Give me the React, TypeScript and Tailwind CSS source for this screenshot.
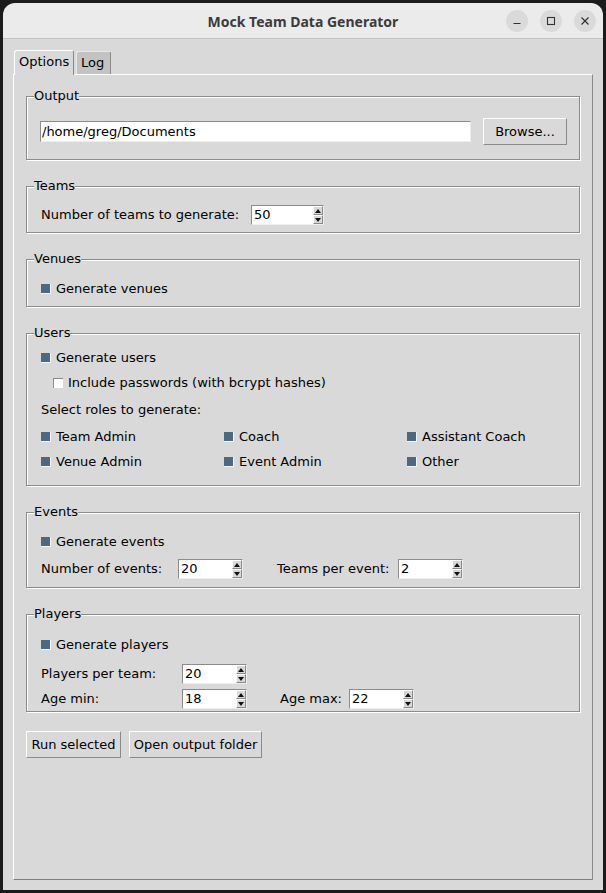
import React from "react";

// shared bits
const sunken = "border-t border-l border-t-[#8c8c8c] border-l-[#8c8c8c] border-b border-r border-b-[#eeeeee] border-r-[#eeeeee]";
const raised = "border-t border-l border-t-white border-l-white border-b border-r border-b-[#8a8a8a] border-r-[#8a8a8a]";

function Check({ label, checked = true, className = "" }: { label: string; checked?: boolean; className?: string }) {
  return (
    <div className={`flex items-center h-[20px] ${className}`}>
      <span
        className={`w-[10px] h-[10px] shrink-0 ${
          checked
            ? "bg-[#4a6984] border-r border-b border-r-[#f4f4f4] border-b-[#f4f4f4]"
            : "bg-white border-t border-l border-t-[#8c8c8c] border-l-[#8c8c8c]"
        }`}
      />
      <span className="ml-[5px]">{label}</span>
    </div>
  );
}

function ArrowBtn({ up }: { up?: boolean }) {
  return (
    <div className={`flex-1 flex items-center justify-center bg-[#d9d9d9] ${raised}`}>
      <svg width="6" height="4" viewBox="0 0 6 4">
        {up ? <path d="M3 0 L6 4 L0 4 Z" fill="#111" /> : <path d="M0 0 L6 0 L3 4 Z" fill="#111" />}
      </svg>
    </div>
  );
}

function Spin({ value, w }: { value: string; w: string }) {
  return (
    <div className={`flex h-[20px] bg-white ${sunken} ${w}`}>
      <div className="flex-1 pl-[2px] leading-[18px]">{value}</div>
      <div className="w-[10px] flex flex-col">
        <ArrowBtn up />
        <ArrowBtn />
      </div>
    </div>
  );
}

function Group({ title, className = "", children }: { title: string; className?: string; children: React.ReactNode }) {
  return (
    <fieldset
      className={`border border-[#8c8c8c] shadow-[inset_1px_1px_0_#ffffff,1px_1px_0_#ffffff] pl-[14px] ${className}`}
    >
      <legend className="-ml-[7px] px-0 leading-[16px] bg-[#d9d9d9]">{title}</legend>
      {children}
    </fieldset>
  );
}

function Button({ label, w }: { label: string; w: string }) {
  return (
    <button className={`h-[27px] bg-[#d9d9d9] ${raised} ${w} text-center leading-[25px]`}>{label}</button>
  );
}

export default function App() {
  return (
    <div className="w-[606px] h-[893px] bg-[#1b1b1b] p-[3px] font-['DejaVu_Sans',sans-serif] text-[13px] text-black">
      <div className="w-[600px] h-[887px] rounded-t-[12px] overflow-hidden flex flex-col">
        {/* title bar */}
        <div className="h-[36px] bg-[#ebebeb] border-b border-[#c4c4c4] flex items-center relative">
          <div className="flex-1 text-center font-['Noto_Sans',sans-serif] font-bold text-[14px] text-[#3b3b3b] pt-[1px]">
            Mock Team Data Generator
          </div>
          <div className="absolute right-[7px] top-[7px] flex gap-[12px]">
            <div className="w-[22px] h-[22px] rounded-full bg-[#dadada] flex items-center justify-center">
              <svg width="10" height="10" viewBox="0 0 10 10">
                <path d="M1.5 7.5 H8.5" stroke="#333" strokeWidth="1.2" />
              </svg>
            </div>
            <div className="w-[22px] h-[22px] rounded-full bg-[#dadada] flex items-center justify-center">
              <svg width="10" height="10" viewBox="0 0 10 10">
                <rect x="1.5" y="1.5" width="7" height="7" fill="none" stroke="#333" strokeWidth="1.1" />
              </svg>
            </div>
            <div className="w-[22px] h-[22px] rounded-full bg-[#dadada] flex items-center justify-center">
              <svg width="10" height="10" viewBox="0 0 10 10">
                <path d="M1.5 1.5 L8.5 8.5 M8.5 1.5 L1.5 8.5" stroke="#333" strokeWidth="1.2" />
              </svg>
            </div>
          </div>
        </div>

        {/* body */}
        <div className="flex-1 bg-[#d9d9d9] pt-[11px] px-[10px] pb-[10px] flex flex-col">
          {/* tabs */}
          <div className="flex items-end h-[24px] pl-[1px] gap-[2px]">
            <div className="relative z-10 -mb-[1px] h-[25px] w-[60px] bg-[#d9d9d9] rounded-t-[3px] border-t border-l border-t-white border-l-white border-r border-r-[#8a8a8a] pl-[4px] leading-[22px]">
              Options
            </div>
            <div className="h-[23px] w-[35px] bg-[#c3c3c3] rounded-t-[3px] border-t border-l border-r border-t-[#e8e8e8] border-l-[#e8e8e8] border-r-[#8a8a8a] pl-[4px] leading-[21px]">
              Log
            </div>
          </div>

          {/* pane */}
          <div className="flex-1 border-t border-l border-t-white border-l-white border-r border-b border-r-[#8a8a8a] border-b-[#7f7f7f] pt-[13px] pl-[12px] pr-[12px] flex flex-col">
            <Group title="Output" className="pt-[14px] pb-[14px] pr-[12px]">
              <div className="flex items-center gap-[12px] h-[27px] -ml-[1px]">
                <div className={`w-[431px] h-[21px] bg-white ${sunken} pl-[1px] leading-[19px]`}>/home/greg/Documents</div>
                <Button label="Browse..." w="w-[84px]" />
              </div>
            </Group>

            <Group title="Teams" className="mt-[18px] pt-[11px] pb-[7px]">
              <div className="flex items-center h-[20px]">
                <span className="w-[210px]">Number of teams to generate:</span>
                <Spin value="50" w="w-[73px]" />
              </div>
            </Group>

            <Group title="Venues" className="mt-[18px] pt-[12px] pb-[7px]">
              <Check label="Generate venues" />
            </Group>

            <Group title="Users" className="mt-[18px] pt-[7px] pb-[13px]">
              <Check label="Generate users" />
              <Check label="Include passwords (with bcrypt hashes)" checked={false} className="mt-[5px] ml-[12px]" />
              <div className="mt-[7px] h-[20px] leading-[20px]">Select roles to generate:</div>
              <div className="mt-[7px] grid grid-cols-[183px_183px_1fr] gap-y-[5px]">
                <Check label="Team Admin" />
                <Check label="Coach" />
                <Check label="Assistant Coach" />
                <Check label="Venue Admin" />
                <Check label="Event Admin" />
                <Check label="Other" />
              </div>
            </Group>

            <Group title="Events" className="mt-[18px] pt-[12px] pb-[8px]">
              <Check label="Generate events" />
              <div className="mt-[7px] flex items-center h-[20px]">
                <span className="w-[137px]">Number of events:</span>
                <Spin value="20" w="w-[65px]" />
                <span className="ml-[34px] w-[121px]">Teams per event:</span>
                <Spin value="2" w="w-[65px]" />
              </div>
            </Group>

            <Group title="Players" className="mt-[18px] pt-[13px] pb-[2px]">
              <Check label="Generate players" />
              <div className="mt-[9px] flex items-center h-[20px]">
                <span className="w-[141px]">Players per team:</span>
                <Spin value="20" w="w-[65px]" />
              </div>
              <div className="mt-[5px] flex items-center h-[20px]">
                <span className="w-[141px]">Age min:</span>
                <Spin value="18" w="w-[65px]" />
                <span className="ml-[33px] w-[69px]">Age max:</span>
                <Spin value="22" w="w-[65px]" />
              </div>
            </Group>

            <div className="mt-[19px] flex gap-[8px]">
              <Button label="Run selected" w="w-[95px]" />
              <Button label="Open output folder" w="w-[133px]" />
            </div>
          </div>
        </div>
      </div>
    </div>
  );
}
